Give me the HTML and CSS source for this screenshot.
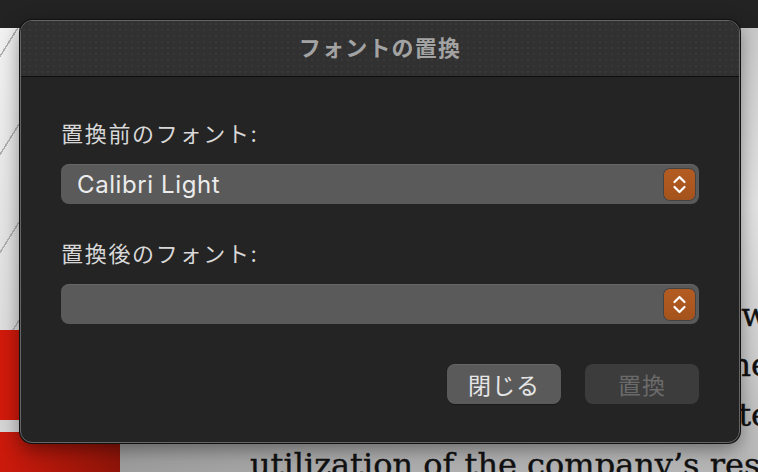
FILE: index.html
```html
<!DOCTYPE html>
<html lang="ja">
<head>
    <meta charset="UTF-8">
    <meta name="viewport" content="width=device-width, initial-scale=1.0">
    <title>フォントの置換</title>
    <link rel="stylesheet" href="styles.css">
</head>
<body>
    <div class="topbar"></div>

    <div class="doc">
        <div class="doc-side">
            <div class="side-lines"></div>
            <div class="side-red"></div>
            <div class="side-strip"></div>
            <div class="side-red side-red-low"></div>
        </div>
        <div class="doc-page">
            <p class="doc-line doc-line-first">in the coming year, our wo</p>
            <p class="doc-line">the goals of everyone</p>
            <p class="doc-line">with a complete</p>
            <p class="doc-line doc-line-left">utilization of the company’s resources</p>
        </div>
    </div>

    <div class="dialog">
        <div class="dialog-title">フォントの置換</div>
        <div class="dialog-body">
            <label class="field-label">置換前のフォント:</label>
            <div class="popup">
                <span class="popup-value">Calibri Light</span>
                <span class="stepper">
                    <svg width="31" height="31" viewBox="0 0 31 31">
                        <path d="M10.5 13 L15.5 8 L20.5 13" fill="none" stroke="#fff" stroke-width="2.2" stroke-linecap="round" stroke-linejoin="round"/>
                        <path d="M10.5 18 L15.5 23 L20.5 18" fill="none" stroke="#fff" stroke-width="2.2" stroke-linecap="round" stroke-linejoin="round"/>
                    </svg>
                </span>
            </div>

            <label class="field-label field-label-second">置換後のフォント:</label>
            <div class="popup">
                <span class="popup-value"></span>
                <span class="stepper">
                    <svg width="31" height="31" viewBox="0 0 31 31">
                        <path d="M10.5 13 L15.5 8 L20.5 13" fill="none" stroke="#fff" stroke-width="2.2" stroke-linecap="round" stroke-linejoin="round"/>
                        <path d="M10.5 18 L15.5 23 L20.5 18" fill="none" stroke="#fff" stroke-width="2.2" stroke-linecap="round" stroke-linejoin="round"/>
                    </svg>
                </span>
            </div>

            <div class="buttons">
                <button class="btn">閉じる</button>
                <button class="btn btn-disabled" disabled>置換</button>
            </div>
        </div>
    </div>
</body>
</html>
```

FILE: styles.css
```css
/* Dark macOS sheet over a document */
html, body {
    margin: 0;
    padding: 0;
    height: 100%;
    overflow: hidden;
}

body {
    background: #242424;
    font-family: Inter, "Noto Sans CJK JP", sans-serif;
    position: relative;
}

.topbar {
    height: 28px;
    background: #232323;
}

.doc {
    display: flex;
    height: 444px;
}

.doc-side {
    width: 120px;
    display: flex;
    flex-direction: column;
    flex-shrink: 0;
}

.side-lines {
    height: 302px;
    background:
        repeating-linear-gradient(-58deg, transparent 0 38px, #b0b0b0 38px 39.5px, transparent 39.5px 52px),
        linear-gradient(#f2f2f2, #dedede);
}

.side-red {
    height: 90px;
    background: linear-gradient(90deg, #d21a0c, #c3150a);
}

.side-strip {
    height: 12px;
    background: #d6d6d6;
}

.side-red-low {
    flex: 1;
    background: linear-gradient(90deg, #cc1a0c, #8e1409);
}

.doc-page {
    flex: 1;
    background: radial-gradient(ellipse at 100% 40%, #e4e4e4 0%, #cfcfcf 40%, #9c9c9c 100%);
    padding-top: 262px;
    overflow: hidden;
}

.doc-line {
    margin: 0;
    height: 50px;
    line-height: 50px;
    font-family: "DejaVu Serif", serif;
    font-size: 32px;
    -webkit-text-stroke: 0.4px #111;
    color: #111;
    white-space: nowrap;
    text-align: right;
    margin-right: -12px;
}

.doc-line-first {
    margin-right: -30px;
}

.doc-line-left {
    text-align: left;
    margin-left: 130px;
    margin-right: 0;
}

/* the sheet lies over the document */
.dialog {
    position: absolute;
    left: 20px;
    top: 20px;
    width: 720px;
    height: 423px;
    box-sizing: border-box;
    background: #242424;
    border: 1px solid #666;
    border-radius: 12px;
    box-shadow: 0 0 0 1px #111, 0 6px 20px rgba(0, 0, 0, 0.45);
    overflow: hidden;
    display: flex;
    flex-direction: column;
}

.dialog-title {
    height: 55px;
    line-height: 55px;
    text-align: center;
    background-color: #313131;
    background-image: radial-gradient(circle, rgba(255, 255, 255, 0.05) 0.6px, transparent 1px);
    background-size: 6px 6px;
    border-bottom: 1px solid #0e0e0e;
    color: #a3a3a3;
    font-weight: bold;
    font-size: 22px;
    letter-spacing: 1.2px;
}

.dialog-body {
    padding: 46px 40px 0;
    display: flex;
    flex-direction: column;
}

.field-label {
    height: 22px;
    line-height: 22px;
    font-size: 22px;
    color: #d8d8d8;
    letter-spacing: 1.7px;
    margin-bottom: 19px;
}

.field-label-second {
    margin-top: 39px;
}

.popup {
    height: 40px;
    border-radius: 8px;
    background: #5a5a5a;
    box-shadow: inset 0 1px 0 rgba(255, 255, 255, 0.08);
    display: flex;
    align-items: center;
    justify-content: space-between;
    padding: 0 4px 0 16px;
}

.popup-value {
    color: #ececec;
    font-size: 24px;
    letter-spacing: 0.6px;
}

.stepper {
    width: 31px;
    height: 31px;
    border-radius: 6px;
    background: linear-gradient(#b35c22, #a5531c);
    box-shadow: 0 0 0 1px rgba(0, 0, 0, 0.25);
    display: flex;
}

.buttons {
    display: flex;
    justify-content: flex-end;
    gap: 24px;
    margin-top: 40px;
}

.btn {
    width: 114px;
    height: 40px;
    border: none;
    border-radius: 8px;
    background: #5a5a5a;
    box-shadow: inset 0 1px 0 rgba(255, 255, 255, 0.08), 0 1px 1px rgba(0, 0, 0, 0.3);
    color: #e6e6e6;
    font-family: Inter, "Noto Sans CJK JP", sans-serif;
    font-size: 23px;
    letter-spacing: 1px;
    padding: 0;
}

.btn-disabled {
    background: #3c3c3c;
    color: #6a6a6a;
    box-shadow: none;
}
```
